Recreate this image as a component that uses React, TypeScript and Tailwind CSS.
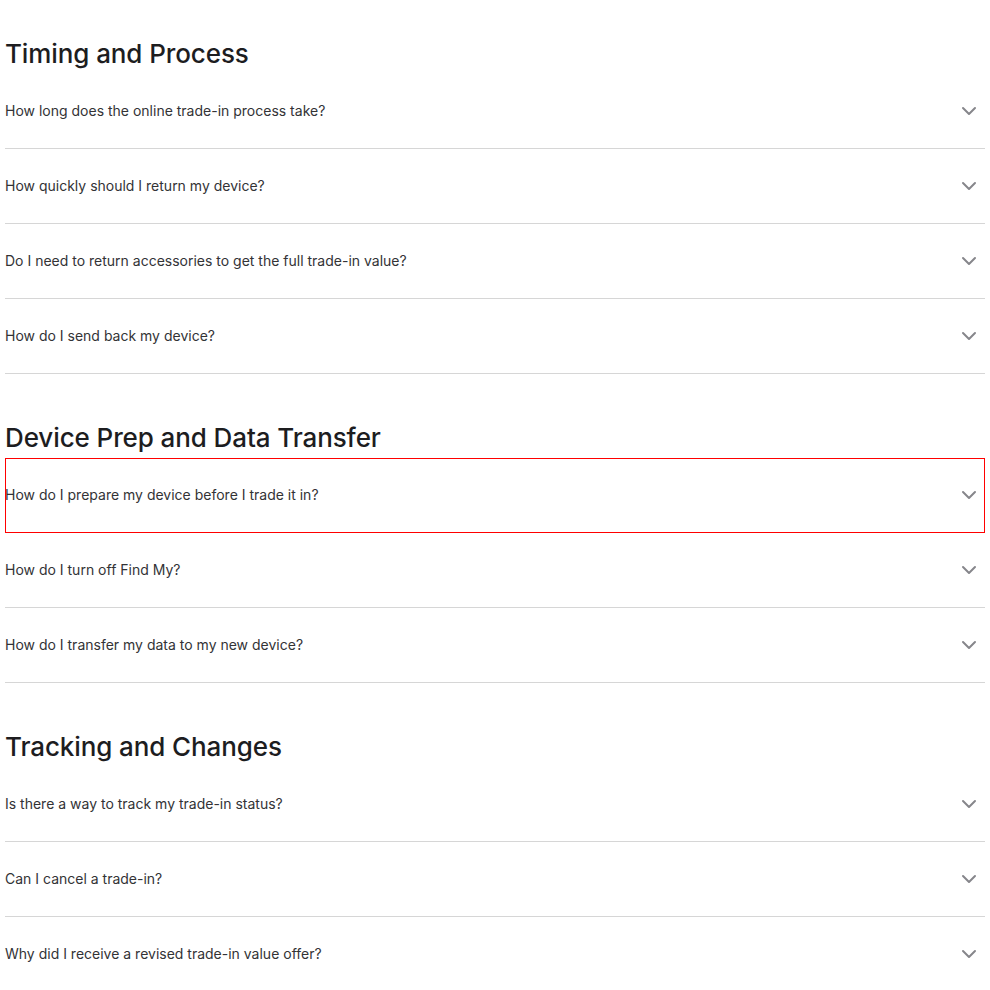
import { ChevronDown } from 'lucide-react'

const sections = [
  {
    title: 'Timing and Process',
    questions: [
      'How long does the online trade-in process take?',
      'How quickly should I return my device?',
      'Do I need to return accessories to get the full trade-in value?',
      'How do I send back my device?',
    ],
  },
  {
    title: 'Device Prep and Data Transfer',
    questions: [
      'How do I prepare my device before I trade it in?',
      'How do I turn off Find My?',
      'How do I transfer my data to my new device?',
    ],
  },
  {
    title: 'Tracking and Changes',
    questions: [
      'Is there a way to track my trade-in status?',
      'Can I cancel a trade-in?',
      'Why did I receive a revised trade-in value offer?',
    ],
  },
]

export default function App() {
  return (
    <div className="min-h-screen bg-white px-[5px] pt-[34px]" style={{ fontFamily: 'Inter, "Noto Sans", sans-serif' }}>
      {sections.map((section, si) => (
        <section key={section.title} className={si > 0 ? 'mt-[44px]' : ''}>
          <h2 className="h-[40px] text-[26px] leading-[40px] font-medium text-[#1d1d1f] tracking-[-0.1px]">
            {section.title}
          </h2>
          <ul>
            {section.questions.map((q, qi) => (
              <li
                key={q}
                className={
                  'flex h-[75px] items-center justify-between border-b border-[#d6d6d6] pb-[2px] ' +
                  (si === 1 && qi === 0 ? 'outline outline-1 -outline-offset-1 outline-[#ff0000]' : '')
                }
              >
                <span className="text-[14px] text-[#333336]">{q}</span>
                <ChevronDown size={24} strokeWidth={2} className="mr-[4px] mt-[2px] text-[#86868b]" />
              </li>
            ))}
          </ul>
        </section>
      ))}
    </div>
  )
}
